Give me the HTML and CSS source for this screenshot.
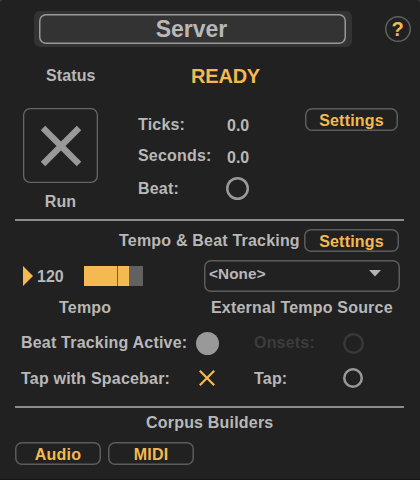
FILE: index.html
```html
<!DOCTYPE html>
<html lang="en">
<head>
<meta charset="utf-8">
<title>Server</title>
<link rel="stylesheet" href="styles.css">
</head>
<body>
<main class="panel">
  <header class="header">
    <div class="title-frame"><h1 class="title">Server</h1></div>
    <button class="help">?</button>
  </header>
  <div class="status"><span class="status-label">Status</span><strong class="ready">READY</strong></div>
  <section class="transport">
    <div class="run">
      <button class="run-toggle" aria-label="Run"><svg width="42" height="42" viewBox="0 0 42 42"><path d="M3 3L39 39M39 3L3 39" stroke="#999" stroke-width="6.3"/></svg></button>
      <span>Run</span>
    </div>
    <div class="readouts">
      <div class="readout ticks"><span>Ticks:</span><span class="value">0.0</span></div>
      <div class="readout seconds"><span class="seconds-label">Seconds:</span><span class="value">0.0</span></div>
      <div class="readout"><span class="beat-label">Beat:</span><i class="led beat-led"></i></div>
    </div>
    <button class="button settings">Settings</button>
  </section>
  <hr class="divider">
  <div class="tracking-head"><span class="tracking-title">Tempo &amp; Beat Tracking</span><button class="button settings-tracking">Settings</button></div>
  <section class="tempo">
    <div class="tempo-control">
      <div class="tempo-row">
        <svg width="10" height="20" viewBox="0 0 10 20"><path d="M0 0L10 10L0 20Z" fill="#f4b950"/></svg>
        <span class="bpm">120</span>
        <div class="slider"><div class="fill"></div><div class="mark"></div><div class="fill-end"></div></div>
      </div>
      <span class="tempo-label">Tempo</span>
    </div>
    <div class="source">
      <div class="select"><span>&lt;None&gt;</span><svg width="12" height="7" viewBox="0 0 12 7"><path d="M0 0H12L6 6.6Z" fill="#b3b3b3"/></svg></div>
      <span class="source-label">External Tempo Source</span>
    </div>
  </section>
  <section class="options">
    <span class="active-label">Beat Tracking Active:</span><i class="dot"></i><span class="disabled">Onsets:</span><i class="led onset-led"></i>
    <span class="space-label">Tap with Spacebar:</span><svg class="tap-x" width="16" height="16" viewBox="0 0 16 16"><path d="M0.8 0.8L15.2 15.2M15.2 0.8L0.8 15.2" stroke="#f4b950" stroke-width="2.2"/></svg><span class="tap-label">Tap:</span><i class="led tap-led"></i>
  </section>
  <hr class="divider">
  <h2 class="builders-title">Corpus Builders</h2>
  <div class="builders"><button class="button">Audio</button><button class="button">MIDI</button></div>
</main>
</body>
</html>
```
FILE: styles.css
```css
* { box-sizing: border-box; }
body { margin: 0; background: #3a3a3a; }
.panel {
  width: 420px;
  height: 480px;
  padding-top: 11px;
  overflow: hidden;
  border-bottom: 1px solid #181316;
  border-radius: 4px 4px 0 0;
  background: #212121;
  color: #b8b8b8;
  font: bold 16px/18px "Liberation Sans", Arial, sans-serif;
  letter-spacing: 0.2px;
  white-space: nowrap;
}
button {
  padding: 0;
  border: 0;
  background: none;
  color: #f4b950;
  font: inherit;
  letter-spacing: inherit;
}
.header { display: flex; height: 36px; padding-left: 34px; }
.title-frame {
  width: 318px;
  height: 36px;
  padding: 3px 6px 3px 5px;
  border-radius: 6px;
  background: #333;
}
.title {
  height: 30px;
  margin: 0;
  border-radius: 7px;
  box-shadow: inset 0 0 0 1.5px #999;
  padding-right: 2px;
  font-size: 23px;
  line-height: 30px;
  letter-spacing: 0;
  text-align: center;
}
.help {
  width: 26px;
  height: 26px;
  margin: 5px 0 0 33px;
  padding-right: 1px;
  border-radius: 50%;
  box-shadow: inset 0 0 0 1.5px #606060;
  font-size: 20px;
  line-height: 27px;
  letter-spacing: 0;
}
.status { display: flex; height: 61px; padding: 20px 0 0 46px; }
.status-label { width: 145px; letter-spacing: 0.1px; }
.ready { color: #f4b950; font-size: 20px; line-height: 18px; letter-spacing: -0.2px; }
.transport { display: flex; height: 111px; padding-left: 23px; }
.run { width: 75px; text-align: center; }
.run-toggle {
  display: grid;
  place-items: center;
  width: 75px;
  height: 75px;
  margin-bottom: 10px;
  border-radius: 7px;
  box-shadow: inset 0 0 0 1.3px #666;
}
.readouts { width: 207px; padding: 8px 0 0 40px; }
.readout { display: flex; align-items: flex-start; height: 32px; }
.readout > :first-child { width: 89px; }
.ticks { height: 31px; }
.value { padding-top: 1px; letter-spacing: 0; }
.seconds .value { padding-top: 2px; }
.beat-label { padding-top: 1px; }
.led { flex: none; border-radius: 50%; box-shadow: inset 0 0 0 2.5px #999; }
.beat-led { width: 23px; height: 23px; margin: -2px 0 0 -1px; }
.button {
  width: 86px;
  height: 23px;
  border-radius: 7px;
  box-shadow: inset 0 0 0 1.5px #5c5c5c;
  line-height: 25px;
}
.settings { width: 93px; }
.divider { height: 2px; margin: 0 16px 0 15px; border: 0; background: #8c8c8c; }
.tracking-head { display: flex; height: 39px; padding: 8px 0 0 119px; }
.tracking-title { width: 185px; padding-top: 3px; }
.settings-tracking { width: 95px; }
.tempo { display: flex; height: 73px; padding-left: 23px; }
.tempo-control { width: 181px; padding-top: 6px; }
.tempo-row { display: flex; height: 33px; }
.bpm { width: 47px; margin: 2px 0 0 4px; letter-spacing: 0; }
.slider { display: flex; width: 59px; height: 20px; background: #616161; }
.fill { width: 33px; background: #f4b950; }
.mark { width: 1px; background: #616161; }
.fill-end { width: 10.5px; background: #f4b950; }
.tempo-label { display: block; margin-left: 36px; }
.source { width: 196px; }
.select {
  display: flex;
  justify-content: space-between;
  height: 32px;
  margin-bottom: 7px;
  padding: 5px 19px 0 5px;
  border-radius: 7px;
  box-shadow: inset 0 0 0 1.5px #5c5c5c;
  font-size: 15.3px;
  letter-spacing: 0.1px;
}
.select svg { margin-top: 5px; }
.source-label { margin-left: 7px; }
.options {
  display: grid;
  grid-template-columns: 175px 58px 90px 30px;
  grid-template-rows: 36px 37px;
  padding-left: 21px;
}
.dot { width: 23px; height: 23px; margin-top: -1px; background: #999; border-radius: 50%; }
.options > span { padding-top: 1px; }
.disabled { color: #3c3c3c; }
.onset-led { width: 21px; height: 21px; margin-left: -1px; box-shadow: inset 0 0 0 2.5px #383838; }
.tap-x { margin: 1px 0 0 3px; }
.tap-led { width: 20px; height: 20px; margin: -1px 0 0 -1px; }
.builders-title { margin: 6px 0 10px 146px; font: inherit; }
.builders { display: flex; gap: 7px; padding-left: 15px; }
```
